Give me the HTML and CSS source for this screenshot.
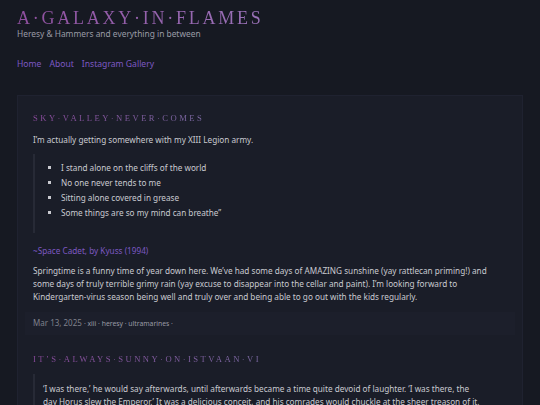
FILE: index.html
```html
<!DOCTYPE html>
<html>
<head>
<meta charset="utf-8">
<link rel="stylesheet" href="styles.css">
</head>
<body>
<header class="site-header">
  <h1 class="site-title">A·GALAXY·IN·FLAMES</h1>
  <p class="site-tagline">Heresy &amp; Hammers and everything in between</p>
  <nav class="site-nav">
    <a href="#">Home</a>
    <a href="#">About</a>
    <a href="#">Instagram Gallery</a>
  </nav>
</header>
<main class="main">
  <article class="post">
    <div class="post-body">
      <h2 class="post-title">SKY·VALLEY·NEVER·COMES</h2>
      <p>I’m actually getting somewhere with my XIII Legion army.</p>
      <blockquote class="quote">
        <ul class="quote-list">
          <li>I stand alone on the cliffs of the world</li>
          <li>No one never tends to me</li>
          <li>Sitting alone covered in grease</li>
          <li>Some things are so my mind can breathe”</li>
        </ul>
      </blockquote>
      <p class="cite-line"><a class="cite" href="#">~Space Cadet, by Kyuss (1994)</a></p>
      <p>Springtime is a funny time of year down here. We’ve had some days of AMAZING sunshine (yay rattlecan priming!) and some days of truly terrible grimy rain (yay excuse to disappear into the cellar and paint). I’m looking forward to Kindergarten-virus season being well and truly over and being able to go out with the kids regularly.</p>
    </div>
    <footer class="post-meta">
      <span class="date">Mar 13, 2025</span>
      <span class="tags">· xiii · heresy · ultramarines ·</span>
    </footer>
  </article>
  <article class="post">
    <div class="post-body">
      <h2 class="post-title">IT’S·ALWAYS·SUNNY·ON·ISTVAAN·VI</h2>
      <blockquote class="quote prose">
        <p>‘I was there,’ he would say afterwards, until afterwards became a time quite devoid of laughter. ‘I was there, the day Horus slew the Emperor.’ It was a delicious conceit, and his comrades would chuckle at the sheer treason of it.</p>
      </blockquote>
    </div>
  </article>
</main>
</body>
</html>
```
FILE: styles.css
```css
html, body {
  margin: 0;
  background: #161922;
}
body {
  padding: 8px 17px 0;
  font-family: "Noto Sans", "Open Sans", sans-serif;
  color: #c9cad0;
  font-size: 8.2px;
}
.site-title {
  margin: 0;
  font-family: "Liberation Serif", serif;
  font-weight: normal;
  font-size: 18px;
  line-height: 20px;
  letter-spacing: 2.75px;
  background: linear-gradient(90deg, #8f4f9f 0%, #9a72b8 100%);
  -webkit-background-clip: text;
  background-clip: text;
  color: transparent;
  display: inline-block;
}
.site-tagline {
  margin: 0;
  color: #9a9ba6;
  font-size: 8.4px;
  line-height: 12px;
}
.site-nav {
  display: flex;
  gap: 8px;
  margin-top: 17px;
  font-size: 8.6px;
  line-height: 14px;
}
.site-nav a, .cite {
  color: #7d58c2;
  text-decoration: none;
}
.main {
  margin-top: 24px;
  background: #1a1d28;
  border: 1px solid #1f2230;
  padding: 7px;
}
.post {
  margin-bottom: 9px;
}
.post-body {
  padding: 8px 16px 9px 8px;
}
.post-title {
  margin: 0 0 8px;
  font-family: "Liberation Serif", serif;
  font-weight: normal;
  font-size: 8.6px;
  letter-spacing: 2.45px;
  line-height: 14px;
  background: linear-gradient(90deg, #8a4a9c 0%, #7c6aa4 100%);
  -webkit-background-clip: text;
  background-clip: text;
  color: transparent;
  display: inline-block;
}
.post-body p {
  margin: 0 0 8px;
  line-height: 13px;
}
.post-body .cite-line {
  margin-bottom: 7px;
}
.post-body > p:last-child,
.quote p:last-child {
  margin-bottom: 0;
}
.quote {
  margin: 0 0 10.5px;
  border-left: 2px solid #272a36;
  padding: 6px 0 13px 8px;
}
.quote-list {
  margin: 0;
  padding-left: 18px;
  list-style: square;
  line-height: 15px;
}
.quote.prose {
  padding: 8.5px 15px 0 8px;
}
.post-meta {
  background: #1c1f2b;
  padding: 5px 8px;
  color: #7f818c;
  font-size: 8px;
  line-height: 12px;
}
.tags {
  font-size: 6.8px;
  color: #9a9ca6;
}
```
